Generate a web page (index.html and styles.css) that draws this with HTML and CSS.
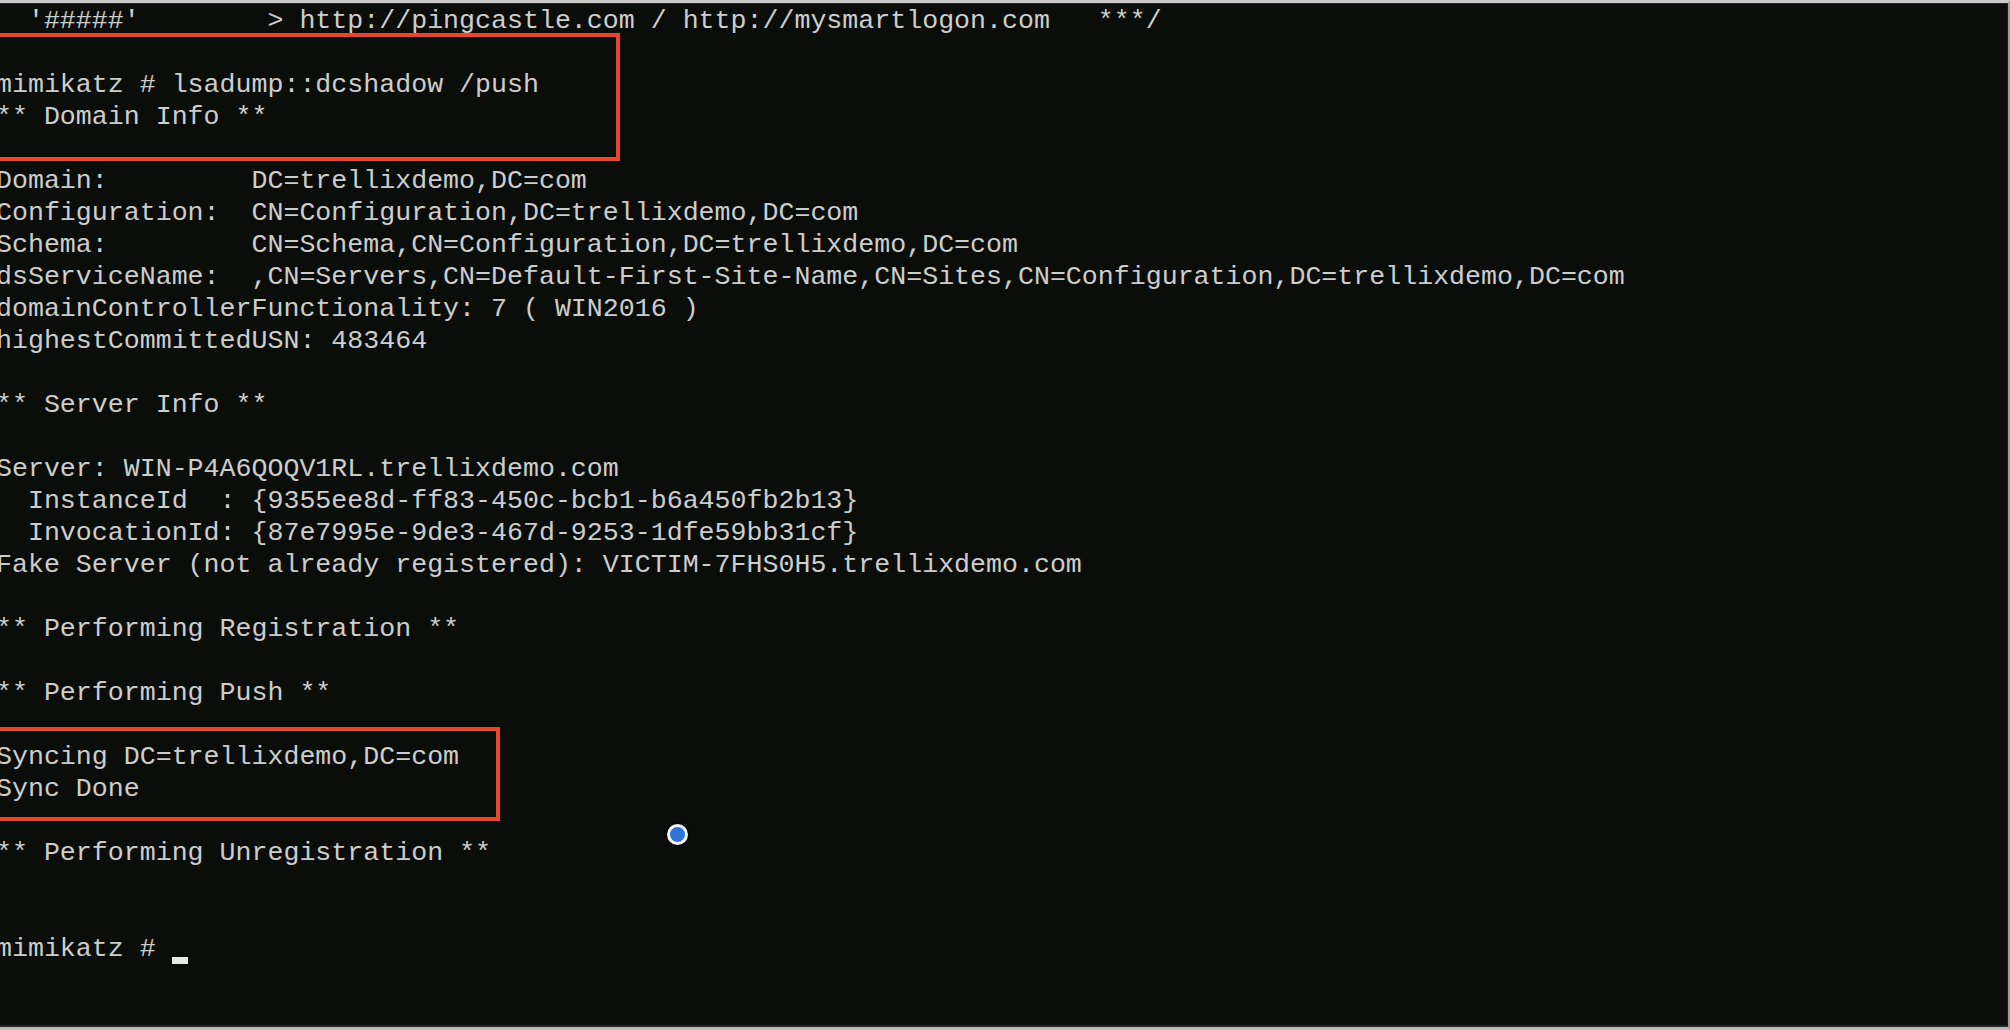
FILE: index.html
```html
<!DOCTYPE html>
<html lang="en">
<head>
<meta charset="utf-8">
<title>mimikatz - lsadump::dcshadow /push</title>
<link rel="stylesheet" href="styles.css">
</head>
<body>
<div class="window">
  <div class="console">
<pre class="output">  '#####'        &gt; http://pingcastle.com / http://mysmartlogon.com   ***/

mimikatz # lsadump::dcshadow /push
** Domain Info **

Domain:         DC=trellixdemo,DC=com
Configuration:  CN=Configuration,DC=trellixdemo,DC=com
Schema:         CN=Schema,CN=Configuration,DC=trellixdemo,DC=com
dsServiceName:  ,CN=Servers,CN=Default-First-Site-Name,CN=Sites,CN=Configuration,DC=trellixdemo,DC=com
domainControllerFunctionality: 7 ( WIN2016 )
highestCommittedUSN: 483464

** Server Info **

Server: WIN-P4A6QOQV1RL.trellixdemo.com
  InstanceId  : {9355ee8d-ff83-450c-bcb1-b6a450fb2b13}
  InvocationId: {87e7995e-9de3-467d-9253-1dfe59bb31cf}
Fake Server (not already registered): VICTIM-7FHS0H5.trellixdemo.com

** Performing Registration **

** Performing Push **

Syncing DC=trellixdemo,DC=com
Sync Done

** Performing Unregistration **


mimikatz # <span class="cursor"></span></pre>
    <div class="mark mark-cmd"></div>
    <div class="mark mark-sync"></div>
    <div class="click-dot"></div>
  </div>
</div>
</body>
</html>
```
FILE: styles.css
```css
html, body {
  margin: 0;
  padding: 0;
  background: #0b0d0b;
}

.window {
  box-sizing: border-box;
  width: 2010px;
  height: 1030px;
  border-top: 3px solid #c9c9c9;
  border-right: 2px solid #9e9e9e;
  border-bottom: 3px solid #b9b9b9;
  background: #0b0d0b;
  overflow: hidden;
}

.console {
  position: relative;
  height: 100%;
  box-shadow: inset 0 1px 0 #2b2b2b, inset 0 -2px 0 #262626, inset -1px 0 0 #1c1c1c;
}

.output {
  margin: 0 0 0 -4px;
  padding: 2px 0 0 0;
  font-family: "Liberation Mono", "DejaVu Sans Mono", monospace;
  font-size: 26.62px;
  line-height: 32px;
  color: #cdcdcd;
  white-space: pre;
}

.cursor {
  display: inline-block;
  width: 16px;
  height: 7px;
  background: #e8e8e8;
  vertical-align: bottom;
  margin-bottom: 1px;
}

.mark {
  position: absolute;
  box-sizing: border-box;
  left: -12px;
  border: 4px solid #e5482f;
}

.mark-cmd {
  top: 30px;
  width: 632px;
  height: 128px;
}

.mark-sync {
  top: 724px;
  width: 512px;
  height: 94px;
}

.click-dot {
  position: absolute;
  box-sizing: border-box;
  left: 667px;
  top: 821px;
  width: 21px;
  height: 21px;
  border-radius: 50%;
  background: #2f72d8;
  border: 3px solid #f2f4f8;
  box-shadow: 0 0 2px 1px rgba(0, 0, 0, 0.6);
}
```
